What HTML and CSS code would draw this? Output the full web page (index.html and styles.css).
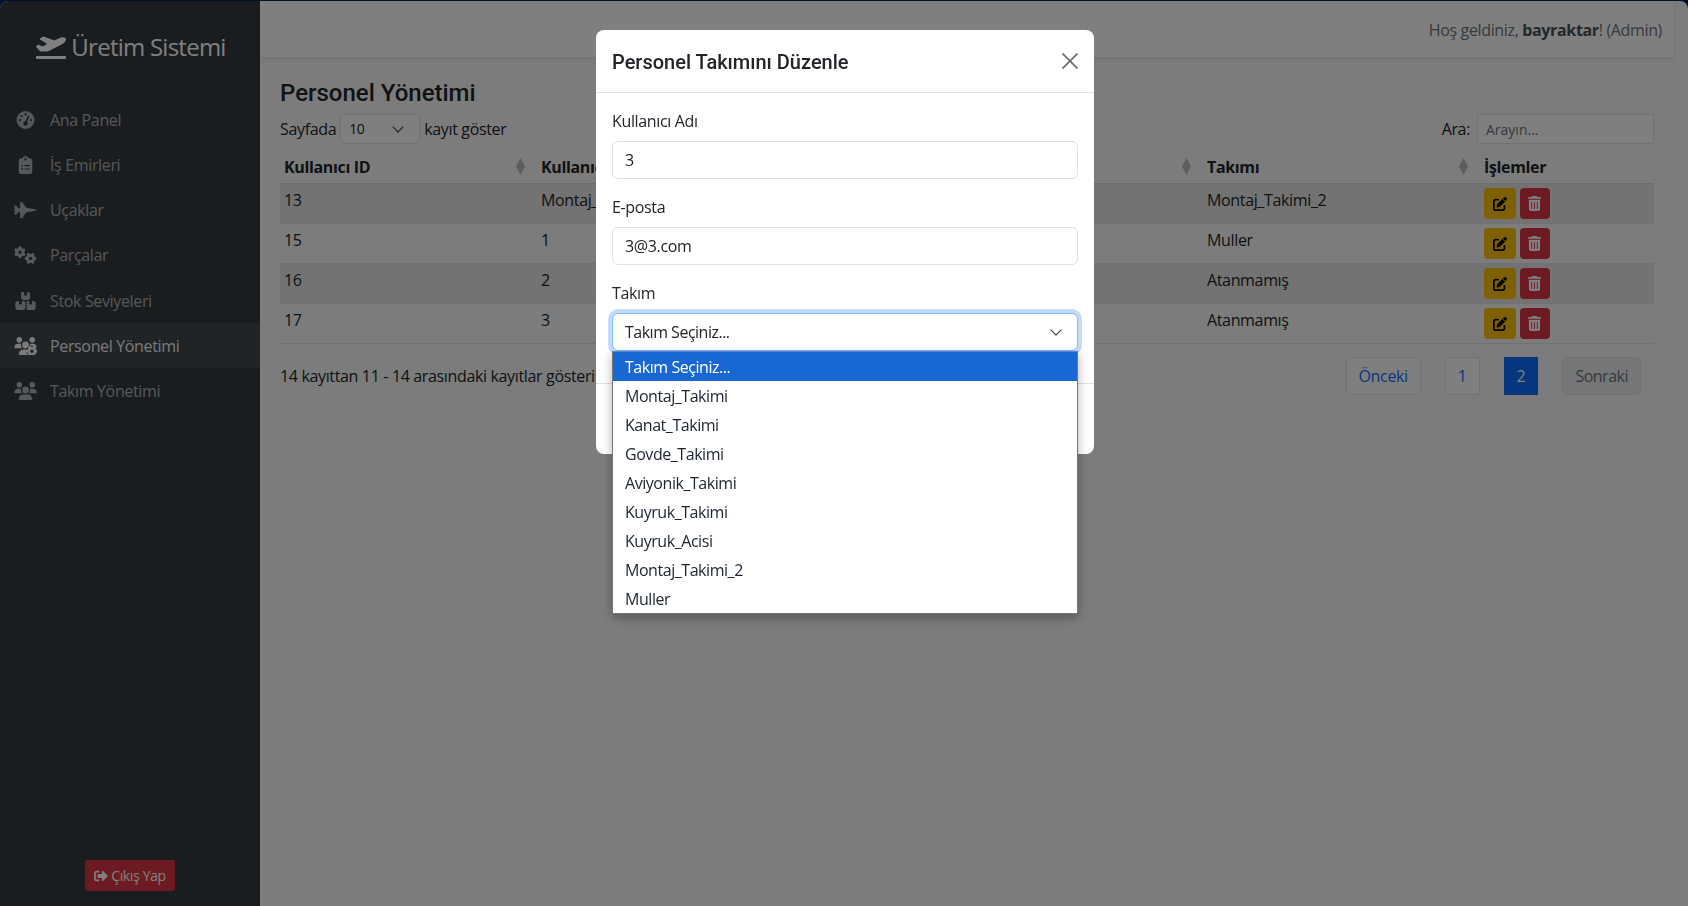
FILE: index.html
```html
<!DOCTYPE html>
<html lang="tr">
<head>
  <meta charset="UTF-8">
  <title>Personel Yönetimi</title>
  <link rel="stylesheet" href="styles.css">
</head>
<body>
  <svg class="icon-defs" aria-hidden="true">
    <symbol id="i-plane" viewBox="0 0 640 512"><path d="M624 448H16c-8.84 0-16 7.16-16 16v32c0 8.84 7.16 16 16 16h608c8.84 0 16-7.16 16-16v-32c0-8.84-7.16-16-16-16zM80.55 341.27c6.28 6.84 15.1 10.72 24.33 10.71l130.54-.18a65.62 65.62 0 0 0 29.64-7.12l290.96-147.65c26.74-13.57 50.71-32.94 67.02-58.31 18.31-28.48 20.3-49.09 13.07-63.65-7.21-14.57-24.74-25.27-58.25-27.45-29.85-1.94-59.54 5.92-86.28 19.48l-98.51 49.99-218.7-82.06a17.799 17.799 0 0 0-18-1.11L90.62 67.29c-10.67 5.41-13.25 19.65-5.17 28.53l156.22 98.1-103.21 52.38-72.35-36.47a17.804 17.804 0 0 0-16.07.02L9.91 230.22c-10.44 5.3-13.19 19.12-5.57 28.08l76.21 82.97z"/></symbol>
    <symbol id="i-gauge" viewBox="0 0 512 512"><path d="M0 256a256 256 0 1 1 512 0A256 256 0 1 1 0 256zM288 96a32 32 0 1 0 -64 0 32 32 0 1 0 64 0zM256 416c35.3 0 64-28.7 64-64c0-17.4-6.9-33.1-18.1-44.6L366 161.7c5.3-12.1-.2-26.3-12.3-31.6s-26.3 .2-31.6 12.3L257.9 288c-.6 0-1.3 0-1.9 0c-35.3 0-64 28.7-64 64s28.7 64 64 64zM176 144a32 32 0 1 0 -64 0 32 32 0 1 0 64 0zM96 288a32 32 0 1 0 0-64 32 32 0 1 0 0 64zm352-32a32 32 0 1 0 -64 0 32 32 0 1 0 64 0z"/></symbol>
    <symbol id="i-clipboard" viewBox="0 0 384 512"><path d="M192 0c-41.8 0-77.4 26.7-90.5 64H64C28.7 64 0 92.7 0 128V448c0 35.3 28.7 64 64 64H320c35.3 0 64-28.7 64-64V128c0-35.3-28.7-64-64-64H282.5C269.4 26.7 233.8 0 192 0zm0 64a32 32 0 1 1 0 64 32 32 0 1 1 0-64zM72 272a24 24 0 1 1 48 0 24 24 0 1 1 -48 0zm104-16H304c8.8 0 16 7.2 16 16s-7.2 16-16 16H176c-8.8 0-16-7.2-16-16s7.2-16 16-16zM72 368a24 24 0 1 1 48 0 24 24 0 1 1 -48 0zm88 0c0-8.8 7.2-16 16-16H304c8.8 0 16 7.2 16 16s-7.2 16-16 16H176c-8.8 0-16-7.2-16-16z"/></symbol>
    <symbol id="i-jet" viewBox="0 0 640 512"><path d="M544 224l-128-16-48-16h-24L227.158 44h39.509C278.333 44 288 41.375 288 38s-9.667-6-21.333-6H152v12h16v164h-48l-66.667-80H18.667L8 138.667V208h8v16h48v2.666l-64 8v42.667l64 8V288H16v16H8v69.333L18.667 384h34.667L120 304h48v164h-16v12h114.667c11.667 0 21.333-2.625 21.333-6s-9.667-6-21.333-6h-39.509L344 320h24l48-16 128-16c96-21.333 96-26.583 96-32 0-5.417 0-10.667-96-32z"/></symbol>
    <symbol id="i-gears" viewBox="0 0 640 512"><path d="M308.5 135.3c7.1-6.3 9.9-16.2 6.2-25c-2.3-5.3-4.8-10.5-7.6-15.5L304 89.4c-3-5-6.3-9.9-9.8-14.6c-5.7-7.6-15.7-10.1-24.7-7.1l-28.2 9.3c-10.7-8.8-23-16-36.2-20.9L199 27.1c-1.9-9.3-9.1-16.7-18.5-17.8C173.9 8.4 167.2 8 160.4 8h-.7c-6.8 0-13.5 .4-20.1 1.2c-9.4 1.1-16.6 8.6-18.5 17.8L115 56.1c-13.3 5-25.5 12.1-36.2 20.9L50.5 67.8c-9-3-19-.5-24.7 7.1c-3.5 4.7-6.8 9.6-9.9 14.6l-3 5.3c-2.8 5-5.3 10.2-7.6 15.6c-3.7 8.7-.9 18.6 6.2 25l22.2 19.8C32.6 161.9 32 168.9 32 176s.6 14.1 1.7 20.9L11.5 216.7c-7.1 6.3-9.9 16.2-6.2 25c2.3 5.3 4.8 10.5 7.6 15.6l3 5.2c3 5.1 6.3 9.9 9.9 14.6c5.7 7.6 15.7 10.1 24.7 7.1l28.2-9.3c10.7 8.8 23 16 36.2 20.9l6.1 29.1c1.9 9.3 9.1 16.7 18.5 17.8c6.7 .8 13.5 1.2 20.4 1.2s13.7-.4 20.4-1.2c9.4-1.1 16.6-8.6 18.5-17.8l6.1-29.1c13.3-5 25.5-12.1 36.2-20.9l28.2 9.3c9 3 19 .5 24.7-7.1c3.5-4.7 6.8-9.5 9.8-14.6l3.1-5.4c2.8-5 5.3-10.2 7.6-15.5c3.7-8.7 .9-18.6-6.2-25l-22.2-19.8c1.1-6.8 1.7-13.8 1.7-20.9s-.6-14.1-1.7-20.9l22.2-19.8zM112 176a48 48 0 1 1 96 0 48 48 0 1 1 -96 0zM504.7 500.5c6.3 7.1 16.2 9.9 25 6.2c5.3-2.3 10.5-4.8 15.5-7.6l5.4-3.1c5-3 9.9-6.3 14.6-9.8c7.6-5.7 10.1-15.7 7.1-24.7l-9.3-28.2c8.8-10.7 16-23 20.9-36.2l29.1-6.1c9.3-1.9 16.7-9.1 17.8-18.5c.8-6.7 1.2-13.5 1.2-20.4s-.4-13.7-1.2-20.4c-1.1-9.4-8.6-16.6-17.8-18.5L583.9 307c-5-13.3-12.1-25.5-20.9-36.2l9.3-28.2c3-9 .5-19-7.1-24.7c-4.7-3.5-9.6-6.8-14.6-9.9l-5.3-3c-5-2.8-10.2-5.3-15.6-7.6c-8.7-3.7-18.6-.9-25 6.2l-19.8 22.2c-6.8-1.1-13.8-1.7-20.9-1.7s-14.1 .6-20.9 1.7l-19.8-22.2c-6.3-7.1-16.2-9.9-25-6.2c-5.3 2.3-10.5 4.8-15.6 7.6l-5.2 3c-5.1 3-9.9 6.3-14.6 9.9c-7.6 5.7-10.1 15.7-7.1 24.7l9.3 28.2c-8.8 10.7-16 23-20.9 36.2L315.1 313c-9.3 1.9-16.7 9.1-17.8 18.5c-.8 6.7-1.2 13.5-1.2 20.4s.4 13.7 1.2 20.4c1.1 9.4 8.6 16.6 17.8 18.5l29.1 6.1c5 13.3 12.1 25.5 20.9 36.2l-9.3 28.2c-3 9-.5 19 7.1 24.7c4.7 3.5 9.5 6.8 14.6 9.8l5.4 3.1c5 2.8 10.2 5.3 15.5 7.6c8.7 3.7 18.6 .9 25-6.2l19.8-22.2c6.8 1.1 13.8 1.7 20.9 1.7s14.1-.6 20.9-1.7l19.8 22.2zM464 304a48 48 0 1 1 0 96 48 48 0 1 1 0-96z"/></symbol>
    <symbol id="i-boxes" viewBox="0 0 576 512"><path d="M248 0H208c-26.5 0-48 21.5-48 48V160c0 35.3 28.7 64 64 64H352c35.3 0 64-28.7 64-64V48c0-26.5-21.5-48-48-48H328V80c0 8.8-7.2 16-16 16H264c-8.8 0-16-7.2-16-16V0zM64 256c-35.3 0-64 28.7-64 64V448c0 35.3 28.7 64 64 64H224c35.3 0 64-28.7 64-64V320c0-35.3-28.7-64-64-64H184v80c0 8.8-7.2 16-16 16H120c-8.8 0-16-7.2-16-16V256H64zM352 512H512c35.3 0 64-28.7 64-64V320c0-35.3-28.7-64-64-64H472v80c0 8.8-7.2 16-16 16H408c-8.8 0-16-7.2-16-16V256H352c-15 0-28.8 5.1-39.7 13.8c4.9 10.4 7.7 22 7.7 34.2V464c0 12.2-2.8 23.8-7.7 34.2C323.2 506.9 337 512 352 512z"/></symbol>
    <symbol id="i-users" viewBox="0 0 640 512"><path d="M144 0a80 80 0 1 1 0 160A80 80 0 1 1 144 0zM512 0a80 80 0 1 1 0 160A80 80 0 1 1 512 0zM0 298.7C0 239.8 47.8 192 106.7 192h42.7c15.9 0 31 3.5 44.6 9.7c-1.3 7.2-1.9 14.7-1.9 22.3c0 38.2 16.8 72.5 43.3 96c-.2 0-.4 0-.7 0H21.3C9.6 320 0 310.4 0 298.7zM405.3 320c-.2 0-.4 0-.7 0c26.6-23.5 43.3-57.8 43.3-96c0-7.6-.7-15-1.9-22.3c13.6-6.3 28.7-9.7 44.6-9.7h42.7C592.2 192 640 239.8 640 298.7c0 11.8-9.6 21.3-21.3 21.3H405.3zM224 224a96 96 0 1 1 192 0 96 96 0 1 1 -192 0zM128 485.3C128 411.7 187.7 352 261.3 352H378.7C452.3 352 512 411.7 512 485.3c0 14.7-11.9 26.7-26.7 26.7H154.7c-14.7 0-26.7-11.9-26.7-26.7z"/></symbol>
    <symbol id="i-edit" viewBox="0 0 512 512"><path d="M471.6 21.7c-21.9-21.9-57.3-21.9-79.2 0L362.3 51.7l97.9 97.9 30.1-30.1c21.9-21.9 21.9-57.3 0-79.2L471.6 21.7zm-299.2 220c-6.1 6.1-10.8 13.6-13.5 21.9l-29.6 88.8c-2.9 8.6-.6 18.1 5.8 24.6s15.9 8.7 24.6 5.8l88.8-29.6c8.2-2.7 15.7-7.4 21.9-13.5L437.7 172.3 339.7 74.3 172.4 241.7zM96 64C43 64 0 107 0 160V416c0 53 43 96 96 96H352c53 0 96-43 96-96V320c0-17.7-14.3-32-32-32s-32 14.3-32 32v96c0 17.7-14.3 32-32 32H96c-17.7 0-32-14.3-32-32V160c0-17.7 14.3-32 32-32h96c17.7 0 32-14.3 32-32s-14.3-32-32-32H96z"/></symbol>
    <symbol id="i-trash" viewBox="0 0 448 512"><path d="M135.2 17.7C140.6 6.8 151.7 0 163.8 0H284.2c12.1 0 23.2 6.8 28.6 17.7L320 32h96c17.7 0 32 14.3 32 32s-14.3 32-32 32H32C14.3 96 0 81.7 0 64S14.3 32 32 32h96l7.2-14.3zM32 128H416V448c0 35.3-28.7 64-64 64H96c-35.3 0-64-28.7-64-64V128zm96 64c-8.8 0-16 7.2-16 16V432c0 8.8 7.2 16 16 16s16-7.2 16-16V208c0-8.8-7.2-16-16-16zm96 0c-8.8 0-16 7.2-16 16V432c0 8.8 7.2 16 16 16s16-7.2 16-16V208c0-8.8-7.2-16-16-16zm96 0c-8.8 0-16 7.2-16 16V432c0 8.8 7.2 16 16 16s16-7.2 16-16V208c0-8.8-7.2-16-16-16z"/></symbol>
    <symbol id="i-logout" viewBox="0 0 512 512"><path d="M497 273L329 441c-15 15-41 4.5-41-17v-96H152c-13.3 0-24-10.7-24-24v-96c0-13.3 10.7-24 24-24h136V88c0-21.4 25.9-32 41-17l168 168c9.3 9.4 9.3 24.6 0 34zM192 436v-40c0-6.6-5.4-12-12-12H96c-17.7 0-32-14.3-32-32V160c0-17.7 14.3-32 32-32h84c6.6 0 12-5.4 12-12V76c0-6.6-5.4-12-12-12H96c-53 0-96 43-96 96v192c0 53 43 96 96 96h84c6.6 0 12-5.4 12-12z"/></symbol>
  </svg>

  <div class="app">
    <aside class="sidebar">
      <div class="brand">
        <svg class="brand-icon"><use href="#i-plane"/></svg>
        <span>Üretim Sistemi</span>
      </div>
      <nav class="side-nav">
        <a href="#"><span class="nav-icon"><svg><use href="#i-gauge"/></svg></span>Ana Panel</a>
        <a href="#"><span class="nav-icon"><svg><use href="#i-clipboard"/></svg></span>İş Emirleri</a>
        <a href="#"><span class="nav-icon"><svg><use href="#i-jet"/></svg></span>Uçaklar</a>
        <a href="#"><span class="nav-icon"><svg><use href="#i-gears"/></svg></span>Parçalar</a>
        <a href="#"><span class="nav-icon"><svg><use href="#i-boxes"/></svg></span>Stok Seviyeleri</a>
        <a href="#" class="active">
          <span class="nav-icon">
            <svg viewBox="0 0 640 512">
              <use href="#i-users" width="640" height="512"/>
              <circle class="gear-gap" cx="490" cy="390" r="150"/>
              <use href="#i-gears" class="small-gear" x="0" y="0" width="640" height="512" transform="translate(38 52)"/>
            </svg>
          </span>Personel Yönetimi</a>
        <a href="#"><span class="nav-icon"><svg><use href="#i-users"/></svg></span>Takım Yönetimi</a>
      </nav>
      <div class="logout-row">
        <a href="#" class="btn-logout"><svg><use href="#i-logout"/></svg>Çıkış Yap</a>
      </div>
    </aside>

    <div class="main">
      <header class="topbar">
        <span>Hoş geldiniz, <b>bayraktar</b>! (Admin)</span>
      </header>

      <section class="content">
        <h1>Personel Yönetimi</h1>

        <div class="table-tools">
          <label class="length-box">Sayfada
            <span class="fake-select small">10</span>
            kayıt göster</label>
          <label class="search-box">Ara:
            <input type="text" placeholder="Arayın...">
          </label>
        </div>

        <table class="data-table">
          <thead>
            <tr>
              <th class="col-id sortable">Kullanıcı ID</th>
              <th class="col-name sortable">Kullanıcı Adı</th>
              <th class="col-mail sortable">E-posta</th>
              <th class="col-team sortable">Takımı</th>
              <th class="col-actions">İşlemler</th>
            </tr>
          </thead>
          <tbody>
            <tr>
              <td>13</td><td>Montaj_2</td><td>montaj2@montaj.com</td><td>Montaj_Takimi_2</td>
              <td>
                <button class="btn-edit"><svg><use href="#i-edit"/></svg></button>
                <button class="btn-delete"><svg><use href="#i-trash"/></svg></button>
              </td>
            </tr>
            <tr>
              <td>15</td><td>1</td><td>1@1.com</td><td>Muller</td>
              <td>
                <button class="btn-edit"><svg><use href="#i-edit"/></svg></button>
                <button class="btn-delete"><svg><use href="#i-trash"/></svg></button>
              </td>
            </tr>
            <tr>
              <td>16</td><td>2</td><td>2@2.com</td><td>Atanmamış</td>
              <td>
                <button class="btn-edit"><svg><use href="#i-edit"/></svg></button>
                <button class="btn-delete"><svg><use href="#i-trash"/></svg></button>
              </td>
            </tr>
            <tr>
              <td>17</td><td>3</td><td>3@3.com</td><td>Atanmamış</td>
              <td>
                <button class="btn-edit"><svg><use href="#i-edit"/></svg></button>
                <button class="btn-delete"><svg><use href="#i-trash"/></svg></button>
              </td>
            </tr>
          </tbody>
        </table>

        <div class="table-foot">
          <div class="info">14 kayıttan 11 - 14 arasındaki kayıtlar gösteriliyor</div>
          <div class="pager">
            <a href="#" class="page-link rounded">Önceki</a>
            <a href="#" class="page-link">1</a>
            <a href="#" class="page-link current">2</a>
            <a href="#" class="page-link rounded disabled">Sonraki</a>
          </div>
        </div>
      </section>
    </div>
  </div>

  <div class="backdrop"></div>

  <div class="modal-wrap">
    <div class="modal">
      <div class="modal-head">
        <h2>Personel Takımını Düzenle</h2>
        <svg class="modal-close" viewBox="0 0 16 16"><path d="M.5 .5l15 15M15.5 .5L.5 15.5"/></svg>
      </div>
      <div class="modal-body">
        <div class="field">
          <label>Kullanıcı Adı</label>
          <input type="text" value="3">
        </div>
        <div class="field">
          <label>E-posta</label>
          <input type="text" value="3@3.com">
        </div>
        <div class="field">
          <label>Takım</label>
          <div class="select-wrap">
            <span class="fake-select focused">Takım Seçiniz...</span>
            <ul class="option-list">
              <li class="selected">Takım Seçiniz...</li>
              <li>Montaj_Takimi</li>
              <li>Kanat_Takimi</li>
              <li>Govde_Takimi</li>
              <li>Aviyonik_Takimi</li>
              <li>Kuyruk_Takimi</li>
              <li>Kuyruk_Acisi</li>
              <li>Montaj_Takimi_2</li>
              <li>Muller</li>
            </ul>
          </div>
        </div>
      </div>
      <div class="modal-foot">
        <button class="btn-save">Kaydet</button>
      </div>
    </div>
  </div>
</body>
</html>
```

FILE: styles.css
```css
* {
  box-sizing: border-box;
}

body {
  margin: 0;
  height: 906px;
  overflow: hidden;
  background: #002060;
  padding-top: 1px;
  font-family: "Open Sans", "Noto Sans", sans-serif;
  font-size: 16px;
  letter-spacing: -0.35px;
  line-height: 24px;
  color: #212529;
}

.icon-defs {
  display: none;
}

a {
  text-decoration: none;
}

.app {
  display: grid;
  grid-template-columns: 260px 1fr;
  height: 905px;
  background: #f8f9fa;
  border-radius: 8px 8px 0 0;
  overflow: hidden;
}

/* sidebar */
.sidebar {
  background: #343a40;
  display: flex;
  flex-direction: column;
}

.brand {
  height: 96.3px;
  padding: 0 0 5px 2px;
  display: flex;
  align-items: center;
  justify-content: center;
  gap: 5px;
  color: #fff;
  font-size: 24px;
  letter-spacing: -0.75px;
}

.brand-icon {
  width: 30px;
  height: 24px;
  fill: currentColor;
}

.side-nav a {
  display: flex;
  align-items: center;
  height: 45.2px;
  padding-left: 14px;
  color: rgba(255, 255, 255, 0.6);
}

.side-nav a.active {
  color: rgba(255, 255, 255, 0.95);
  background: rgba(255, 255, 255, 0.08);
}

.nav-icon {
  width: 23px;
  margin-right: 13px;
  display: flex;
  justify-content: center;
  flex: none;
}

.nav-icon svg {
  width: 23px;
  height: 18px;
  fill: currentColor;
  flex: none;
}

.gear-gap {
  fill: #3e4449;
}

.small-gear {
  clip-path: inset(38% 0 0 44%);
}

.logout-row {
  margin-top: auto;
  padding-bottom: 15px;
  display: flex;
  justify-content: center;
}

.btn-logout {
  display: flex;
  align-items: center;
  justify-content: center;
  gap: 3px;
  width: 90px;
  height: 31px;
  background: #dc3545;
  color: #fff;
  border-radius: 3px;
  font-size: 14px;
}

.btn-logout svg {
  width: 14px;
  height: 14px;
  fill: currentColor;
}

/* main */
.main {
  min-width: 0;
}

.topbar {
  height: 56px;
  margin-right: 14px;
  padding: 17px 12px 0 0;
  background: #fff;
  box-shadow: 0 2px 4px rgba(0, 0, 0, 0.1);
  text-align: right;
  color: #6c757d;
}

.topbar b {
  color: #495057;
}

.content {
  padding: 22px 34px 0 20px;
}

.content h1 {
  margin: 0 0 6px;
  font-family: Roboto, "Open Sans", sans-serif;
  font-size: 24px;
  font-weight: 500;
  letter-spacing: 0;
  line-height: 29px;
}

.table-tools {
  display: flex;
  justify-content: space-between;
  align-items: center;
  height: 30px;
  margin-bottom: 5px;
}

.length-box,
.search-box {
  display: flex;
  align-items: center;
  gap: 4px;
}

.search-box {
  gap: 7px;
}

.search-box input {
  width: 177px;
  height: 30px;
  padding: 0 8px;
  border: 1px solid #dee2e6;
  border-radius: 3px;
  font: inherit;
  font-size: 14px;
  background: #fff;
  color: #212529;
}

.search-box input::placeholder {
  color: #6c757d;
}

.fake-select {
  display: block;
  position: relative;
  height: 38px;
  padding: 6px 12px;
  background: #fff;
  border: 1px solid #dee2e6;
  border-radius: 6px;
}

.fake-select::after {
  content: "";
  position: absolute;
  right: 17px;
  top: 50%;
  width: 7px;
  height: 7px;
  margin-top: -6px;
  border-right: 1.5px solid #343a40;
  border-bottom: 1.5px solid #343a40;
  transform: rotate(45deg);
}

.fake-select.small {
  width: 80px;
  height: 30px;
  padding: 2px 8px;
  font-size: 14px;
  border-radius: 4px;
}

.fake-select.focused {
  border-color: #86b7fe;
  box-shadow: 0 0 0 4px rgba(13, 110, 253, 0.25);
  letter-spacing: -0.5px;
}

/* table */
.data-table {
  width: 1374px;
  border-collapse: collapse;
  table-layout: fixed;
}

.data-table th,
.data-table td {
  padding: 4px;
  text-align: left;
  vertical-align: top;
  border-bottom: 1px solid #dee2e6;
  overflow: hidden;
  white-space: nowrap;
}

.data-table th {
  position: relative;
  height: 34px;
  padding-top: 6px;
  padding-bottom: 3px;
  font-weight: 700;
  border-bottom-color: #d5d8db;
}

.col-id { width: 257px; }
.col-name { width: 333px; }
.col-mail { width: 333px; }
.col-team { width: 277px; }
.col-actions { width: 174px; }

.sortable::after {
  content: "";
  position: absolute;
  right: 12px;
  top: 9px;
  width: 9px;
  height: 17px;
  background: #b9bbbd;
  clip-path: polygon(50% 0, 100% 50%, 50% 100%, 0 50%);
}

.data-table tbody tr {
  height: 40px;
}

.data-table tbody tr:nth-child(odd) td {
  background: #e6e6e6;
}

.data-table button {
  width: 30px;
  height: 31px;
  padding: 0;
  border: 0;
  border-radius: 4px;
  vertical-align: top;
}

.data-table button svg {
  vertical-align: middle;
  fill: currentColor;
}

.btn-edit {
  background: #ffc107;
  color: #000;
  width: 32px !important;
}

.btn-edit svg {
  width: 14px;
  height: 14px;
}

.btn-delete {
  background: #dc3545;
  color: #fff;
}

.btn-delete svg {
  width: 13px;
  height: 15px;
}

.table-foot {
  display: flex;
  justify-content: space-between;
  align-items: center;
  margin-top: 13px;
  height: 38px;
}

.pager {
  display: flex;
  gap: 24px;
  margin-right: 13px;
}

.page-link {
  height: 38px;
  padding: 6px 12px;
  background: #fff;
  border: 1px solid #dee2e6;
  color: #0d6efd;
}

.page-link.rounded {
  border-radius: 5px;
}

.page-link.current {
  background: #0d6efd;
  border-color: #0d6efd;
  color: #fff;
}

.page-link.disabled {
  background: #e9ecef;
  color: #6c757d;
  letter-spacing: -0.5px;
}

/* modal */
.backdrop {
  position: fixed;
  inset: 0;
  background: rgba(0, 0, 0, 0.5);
}

.modal-wrap {
  position: fixed;
  inset: 0;
  padding: 30px 0 0 2px;
  display: flex;
  justify-content: center;
  align-items: flex-start;
}

.modal {
  width: 498px;
  background: #fff;
  border-radius: 8px;
}

.modal-head {
  display: flex;
  justify-content: space-between;
  align-items: center;
  height: 63px;
  padding: 0 16px;
  border-bottom: 1px solid #dee2e6;
}

.modal-head h2 {
  margin: 0;
  padding-top: 1px;
  font-family: Roboto, "Open Sans", sans-serif;
  font-size: 20px;
  font-weight: 500;
  letter-spacing: 0;
  line-height: 30px;
}

.modal-close {
  width: 16px;
  height: 16px;
  margin-bottom: 1px;
  fill: none;
  stroke: #6e6e6e;
  stroke-width: 1.8;
}

.modal-body {
  padding: 16px 16px 0;
}

.field {
  margin-bottom: 16px;
}

.field label {
  display: block;
  margin-bottom: 8px;
}

.field input {
  display: block;
  width: 100%;
  height: 38px;
  padding: 6px 12px;
  border: 1px solid #dee2e6;
  border-radius: 6px;
  font: inherit;
  letter-spacing: inherit;
  color: #212529;
}

.select-wrap {
  position: relative;
}

.option-list {
  position: absolute;
  top: 38px;
  left: 0;
  width: 100%;
  margin: 0;
  padding: 0;
  list-style: none;
  background: #fff;
  border: 1px solid #767676;
  border-top-color: #5f86c4;
  box-shadow: 0 4px 10px rgba(0, 0, 0, 0.3);
  z-index: 2;
  color: #1b2430;
  letter-spacing: -0.45px;
}

.option-list li {
  height: 29px;
  padding: 3px 12px 0;
  line-height: 25px;
}

.option-list .selected {
  background: #1967d2;
  color: #fff;
}

.modal-foot {
  height: 71px;
  margin-top: 32px;
  padding: 16px;
  border-top: 1px solid #dee2e6;
  text-align: right;
}

.btn-save {
  height: 38px;
  padding: 0 12px;
  border: 0;
  background: #0d6efd;
  color: #fff;
  border-radius: 6px;
}
```
